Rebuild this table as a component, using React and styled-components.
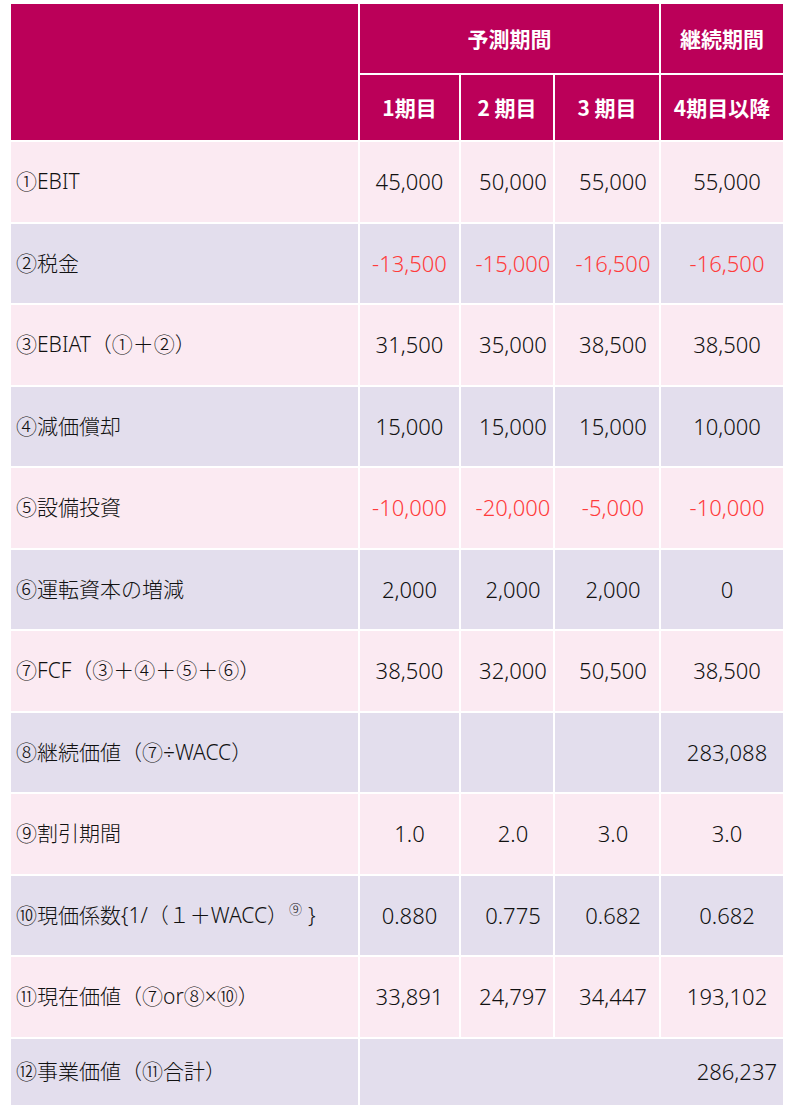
import React from "react";
import styled, { createGlobalStyle } from "styled-components";

const GlobalStyle = createGlobalStyle`
  html, body {
    margin: 0;
    padding: 0;
    background: #ffffff;
  }
  body {
    font-family: "Noto Sans", "Noto Sans CJK JP", sans-serif;
    font-weight: 300;
    color: #111111;
  }
`;

const Page = styled.div`
  padding: 2px 0 0 9px;
`;

const Table = styled.table`
  width: 776px;
  border-collapse: separate;
  border-spacing: 2px;
  table-layout: fixed;
  font-size: 21px;
  line-height: 1.3;
`;

const HeadRow = styled.tr`
  height: ${(p) => p.$height}px;
`;

const HeadCell = styled.th`
  background: #bb0059;
  color: #ffffff;
  font-family: "Noto Sans CJK JP", "Noto Sans", sans-serif;
  font-weight: 700;
  font-size: 21px;
  text-align: center;
  vertical-align: middle;
  padding: 0;
  white-space: nowrap;
`;

const BodyRow = styled.tr`
  height: 79.5px;
  background: ${(p) => (p.$alt ? "#e3deed" : "#fbeaf2")};
`;

const TotalRow = styled.tr`
  height: 66px;
  background: #e3deed;
`;

const LabelCell = styled.td`
  padding: 0 0 0 5px;
  vertical-align: middle;
  white-space: nowrap;
`;

const NumCell = styled.td`
  padding: 0 0 0 ${(p) => p.$shift}px;
  font-size: 22px;
  text-align: center;
  vertical-align: middle;
  white-space: nowrap;
  color: ${(p) => (p.$negative ? "#ff3b3b" : "#111111")};
`;

const TotalCell = styled.td`
  padding: 0 6px 0 0;
  font-size: 22px;
  text-align: right;
  vertical-align: middle;
`;

const Sup = styled.sup`
  font-size: 13px;
  vertical-align: 9px;
  line-height: 0;
  margin: 0 6px 0 1px;
`;

const rows = [
  { label: "①EBIT", values: ["45,000", "50,000", "55,000", "55,000"] },
  { label: "②税金", values: ["-13,500", "-15,000", "-16,500", "-16,500"], negative: true },
  { label: "③EBIAT（①＋②）", values: ["31,500", "35,000", "38,500", "38,500"] },
  { label: "④減価償却", values: ["15,000", "15,000", "15,000", "10,000"] },
  { label: "⑤設備投資", values: ["-10,000", "-20,000", "-5,000", "-10,000"], negative: true },
  { label: "⑥運転資本の増減", values: ["2,000", "2,000", "2,000", "0"] },
  { label: "⑦FCF（③＋④＋⑤＋⑥）", values: ["38,500", "32,000", "50,500", "38,500"] },
  { label: "⑧継続価値（⑦÷WACC）", values: ["", "", "", "283,088"] },
  { label: "⑨割引期間", values: ["1.0", "2.0", "3.0", "3.0"] },
  {
    label: (
      <>
        ⑩現価係数{"{"}1/（１＋WACC）<Sup>⑨</Sup>
        {"}"}
      </>
    ),
    values: ["0.880", "0.775", "0.682", "0.682"],
  },
  { label: "⑪現在価値（⑦or⑧×⑩）", values: ["33,891", "24,797", "34,447", "193,102"] },
];

// per-column offset of the centred numbers
const shifts = [0, 12, 12, 10];

const App = () => {
  return (
    <>
      <GlobalStyle />
      <Page>
        <Table>
          <colgroup>
            <col style={{ width: 347 }} />
            <col style={{ width: 99 }} />
            <col style={{ width: 92 }} />
            <col style={{ width: 104 }} />
            <col style={{ width: 122 }} />
          </colgroup>
          <thead>
            <HeadRow $height={69}>
              <HeadCell rowSpan={2} />
              <HeadCell colSpan={3}>予測期間</HeadCell>
              <HeadCell>継続期間</HeadCell>
            </HeadRow>
            <HeadRow $height={65}>
              <HeadCell>1期目</HeadCell>
              <HeadCell>2 期目</HeadCell>
              <HeadCell>3 期目</HeadCell>
              <HeadCell>4期目以降</HeadCell>
            </HeadRow>
          </thead>
          <tbody>
            {rows.map((row, i) => (
              <BodyRow key={i} $alt={i % 2 === 1}>
                <LabelCell>{row.label}</LabelCell>
                {row.values.map((v, j) => (
                  <NumCell key={j} $negative={row.negative} $shift={shifts[j]}>
                    {v}
                  </NumCell>
                ))}
              </BodyRow>
            ))}
            <TotalRow>
              <LabelCell>⑫事業価値（⑪合計）</LabelCell>
              <TotalCell colSpan={4}>286,237</TotalCell>
            </TotalRow>
          </tbody>
        </Table>
      </Page>
    </>
  );
};

export default App;
